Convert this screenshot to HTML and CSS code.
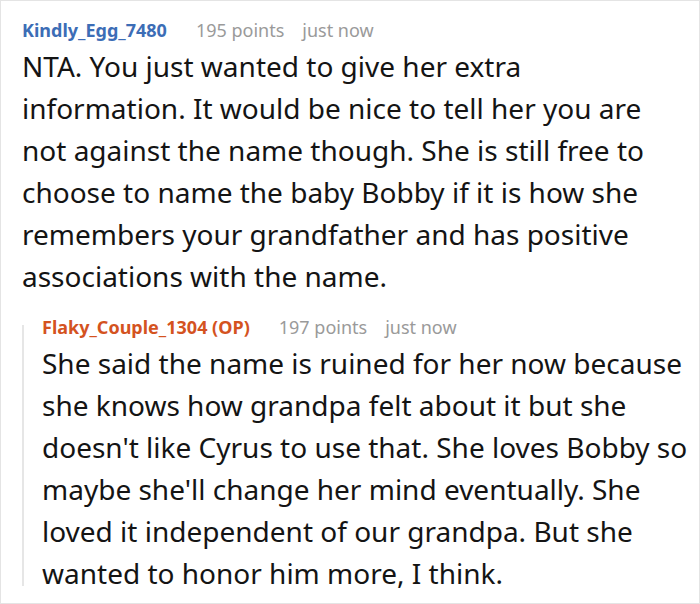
FILE: index.html
```html
<!DOCTYPE html>
<html lang="en">
<head>
  <meta charset="UTF-8">
  <title>Comments</title>
  <link rel="stylesheet" href="styles.css">
</head>
<body>

<div class="thread">
  <div class="comment">
    <div class="meta">
      <span class="author">Kindly_Egg_7480</span>
      <span class="points">195 points</span>
      <span class="time">just now</span>
    </div>
    <p class="text">NTA. You just wanted to give her extra information. It would be nice to tell her you are not against the name though. She is still free to choose to name the baby Bobby if it is how she remembers your grandfather and has positive associations with the name.</p>
  </div>

  <div class="reply">
    <div class="rule"></div>
    <div class="comment">
      <div class="meta">
        <span class="author op">Flaky_Couple_1304 (OP)</span>
        <span class="points">197 points</span>
        <span class="time">just now</span>
      </div>
      <p class="text">She said the name is ruined for her now because she knows how grandpa felt about it but she doesn't like Cyrus to use that. She loves Bobby so maybe she'll change her mind eventually. She loved it independent of our grandpa. But she wanted to honor him more, I think.</p>
    </div>
  </div>
</div>

</body>
</html>
```

FILE: styles.css
```css
body {
  margin: 0;
  background: #fff;
  font-family: 'Noto Sans', 'Open Sans', sans-serif;
  color: #141414;
}
.thread {
  box-sizing: border-box;
  width: 700px;
  height: 604px;
  border: 1px solid #e4e4e4;
  padding: 17px 9px 0 21px;
  overflow: hidden;
}
.comment {
  flex: 1;
  min-width: 0;
}
.meta {
  display: flex;
  font-size: 18px;
  line-height: 24px;
}
.author {
  font-weight: bold;
  color: #3c6db6;
  margin-right: 29px;
}
.author.op {
  color: #d4531f;
}
.points {
  color: #9a9a9a;
  margin-right: 18px;
}
.time {
  color: #9a9a9a;
}
.text {
  margin: 3px 0 0;
  font-size: 28px;
  line-height: 42px;
}
.reply {
  display: flex;
  margin-top: 18px;
}
.rule {
  width: 2px;
  margin: 10px 18px 8px 0;
  background: #e6e6e6;
}
```
